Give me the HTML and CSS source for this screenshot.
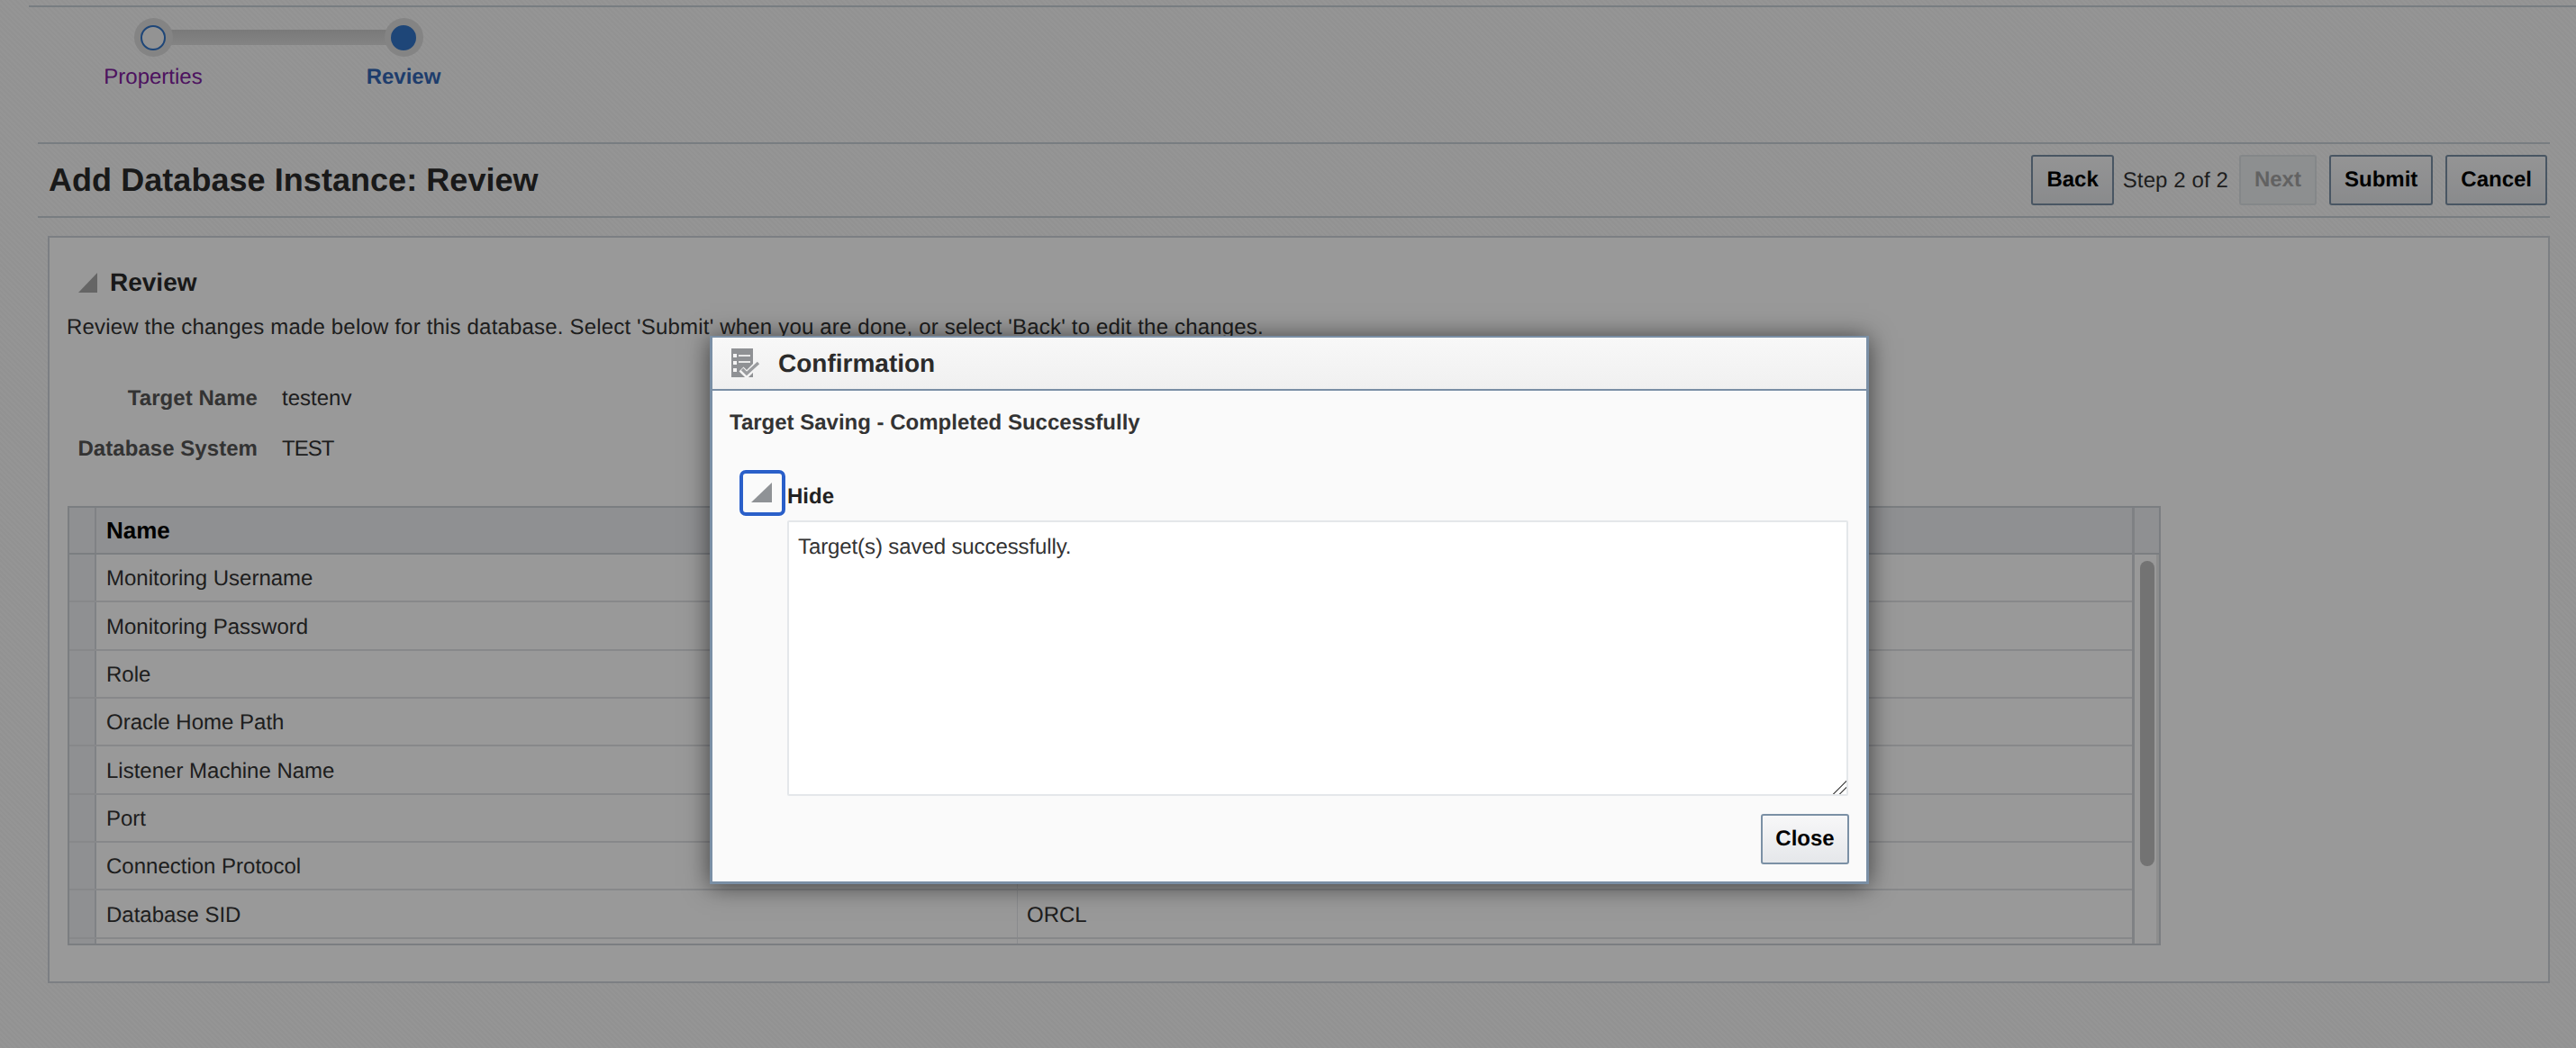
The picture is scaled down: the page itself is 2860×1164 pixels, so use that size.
FILE: index.html
```html
<!DOCTYPE html>
<html lang="en">
<head>
<meta charset="utf-8">
<title>Add Database Instance: Review</title>
<link rel="stylesheet" href="styles.css">
</head>
<body>
<div class="page">
  <div class="top-rule"></div>
  <nav class="train">
    <div class="step step-visited"><span class="dot"><span class="dot-inner"></span></span><a class="step-label">Properties</a></div>
    <div class="step step-current"><span class="dot"><span class="dot-inner"></span></span><a class="step-label">Review</a></div>
  </nav>
  <header class="page-head">
    <h1 class="title">Add Database Instance: Review</h1>
    <div class="actions">
      <button class="btn">Back</button>
      <span class="step-count">Step 2 of 2</span>
      <button class="btn btn-off">Next</button>
      <button class="btn btn-gap">Submit</button>
      <button class="btn btn-gap">Cancel</button>
    </div>
  </header>
  <main class="panel">
    <div class="section-head">
      <svg class="tri" viewBox="0 0 21 22"><polygon points="21,0 21,22 0,22"/></svg>
      <h2 class="section-title">Review</h2>
    </div>
    <p class="desc">Review the changes made below for this database. Select 'Submit' when you are done, or select 'Back' to edit the changes.</p>
    <dl class="form">
      <dt>Target Name</dt><dd>testenv</dd>
      <dt>Database System</dt><dd class="caps">TEST</dd>
    </dl>
    <div class="tbl">
      <div class="tbl-main">
        <div class="tr th"><div class="gut"></div><div class="td">Name</div><div class="td"></div></div>
        <div class="tr"><div class="gut"></div><div class="td">Monitoring Username</div><div class="td"></div></div>
        <div class="tr"><div class="gut"></div><div class="td">Monitoring Password</div><div class="td"></div></div>
        <div class="tr"><div class="gut"></div><div class="td">Role</div><div class="td"></div></div>
        <div class="tr"><div class="gut"></div><div class="td">Oracle Home Path</div><div class="td"></div></div>
        <div class="tr"><div class="gut"></div><div class="td">Listener Machine Name</div><div class="td"></div></div>
        <div class="tr"><div class="gut"></div><div class="td">Port</div><div class="td"></div></div>
        <div class="tr"><div class="gut"></div><div class="td">Connection Protocol</div><div class="td"></div></div>
        <div class="tr"><div class="gut"></div><div class="td">Database SID</div><div class="td">ORCL</div></div>
        <div class="tr"><div class="gut"></div><div class="td"></div><div class="td"></div></div>
      </div>
      <div class="scroller">
        <div class="scroll-corner"></div>
        <div class="scroll-track"><div class="scroll-thumb"></div></div>
      </div>
    </div>
  </main>
</div>
<div class="scrim"></div>
<section class="dialog">
  <div class="dlg-head">
    <svg class="dlg-icon" viewBox="0 0 32 33">
      <rect x="0" y="0" width="24" height="32" fill="#8f9194"/>
      <rect x="2" y="6" width="4" height="4" fill="#f4f4f4"/>
      <rect x="2" y="14" width="4" height="4" fill="#f4f4f4"/>
      <rect x="2" y="22" width="4" height="4" fill="#f4f4f4"/>
      <rect x="8" y="7" width="13" height="2" fill="#e8e8e8"/>
      <rect x="8" y="14" width="13" height="2" fill="#e8e8e8"/>
      <path d="M11 23l6 6L31 15" fill="none" stroke="#f4f4f4" stroke-width="7"/>
      <path d="M12 23l5 5L30 16" fill="none" stroke="#9a9c9f" stroke-width="3.4"/>
    </svg>
    <h2 class="dlg-title">Confirmation</h2>
  </div>
  <div class="dlg-body">
    <div class="dlg-msg">Target Saving - Completed Successfully</div>
    <div class="hide-row">
      <button class="disclose"><svg class="tri-sm" viewBox="0 0 23 22"><polygon points="23,0 23,22 0,22"/></svg></button>
      <span class="hide-label">Hide</span>
    </div>
    <textarea class="detail" readonly>Target(s) saved successfully.</textarea>
    <div class="dlg-foot"><button class="btn">Close</button></div>
  </div>
</section>
</body>
</html>
```
FILE: styles.css
```css
* { box-sizing: border-box; }
html, body { margin: 0; height: 1164px; overflow: hidden; }
body {
  position: relative;
  font-family: "Liberation Sans", Arial, sans-serif;
  font-size: 24px;
  color: #333;
  text-rendering: geometricPrecision;
  background: repeating-linear-gradient(45deg, #f9f9f9 0 2px, #f3f3f4 2px 4px);
}
.page { display: flex; flex-direction: column; height: 1164px; padding-top: 6px; }
.top-rule { height: 2px; margin-left: 32px; background: #c9d0d8; flex: none; }

.train { display: flex; padding: 12px 0 0 31px; height: 150px; flex: none; }
.step { position: relative; display: flex; flex-direction: column; align-items: center; width: 278px; }
.dot { position: relative; z-index: 1; display: flex; align-items: center; justify-content: center; width: 43px; height: 43px; border-radius: 50%; background: #dcdcdc; }
.dot-inner { width: 28px; height: 28px; border-radius: 50%; border: 2px solid #3375c8; background: #f6f6f6; }
.step-current .dot-inner { background: #3375c8; }
.step-visited::after { content: ""; position: absolute; left: 139px; top: 13px; width: 278px; height: 17px; background: linear-gradient(#cbcbcb, #dcdcdc); }
.step-label { margin-top: 8px; line-height: 30px; }
.step-visited .step-label { color: #80209e; }
.step-current .step-label { color: #3366b4; font-weight: bold; }

.page-head { display: flex; align-items: center; justify-content: space-between; height: 84px; margin: 0 29px 0 42px; padding: 0 3px 0 12px; border-top: 2px solid #c9d0d8; border-bottom: 2px solid #c9d0d8; flex: none; }
.title { margin: 0; font-size: 36px; line-height: 44px; font-weight: bold; letter-spacing: .05px; color: #2b2b2b; }
.actions { display: flex; align-items: center; }
.btn { height: 56px; padding: 0 15px; border: 2px solid #7b90a5; border-radius: 3px; background: linear-gradient(#f7f7f8, #e5e7ea); font: bold 24px "Liberation Sans", Arial, sans-serif; color: #000; text-rendering: geometricPrecision; }
.btn-off { color: #a4a4a4; border-color: #dde1e5; background: #eceef0; margin-left: 12px; }
.btn-gap { margin-left: 14px; }
.step-count { margin-left: 10px; padding-top: 2px; letter-spacing: .1px; color: #333; }

.panel { margin: 20px 29px 0 53px; padding: 33px 20px 40px 19px; height: 830px; border: 2px solid #cfd4da; background: #fff; flex: none; }
.section-head { display: flex; align-items: center; height: 34px; margin-left: 13px; gap: 14px; }
.tri { width: 21px; height: 22px; flex: none; }
.tri polygon { fill: #a9a9a9; }
.section-title { margin: 0; font-size: 28px; line-height: 34px; font-weight: bold; color: #2b2b2b; }
.desc { margin: 17px 0 0; line-height: 32px; letter-spacing: .18px; color: #333; }
.form { display: grid; grid-template-columns: 212px 1fr; column-gap: 27px; grid-auto-rows: 56px; margin: 34px 0 0; align-items: center; }
.form dt { padding-top: 2px; text-align: right; font-weight: bold; letter-spacing: .05px; color: #555; }
.form dd { margin: 0; padding-top: 2px; color: #333; }
.form .caps { letter-spacing: -1px; }

.tbl { display: flex; width: 2324px; height: 488px; margin: 36px 0 0 1px; border: 2px solid #cdd2d8; overflow: hidden; }
.tbl-main { flex: 1; min-width: 0; }
.tr { display: grid; grid-template-columns: 30px 1022px 1fr; height: 53.35px; border-bottom: 2px solid #e1e3e6; }
.th { height: 52px; border-bottom: 2px solid #cdd2d8; background: #eef0f3; font-weight: bold; font-size: 26px; color: #000; }
.gut { background: #eef0f3; border-right: 2px solid #d5d9de; }
.td { display: flex; align-items: center; padding: 3px 0 0 11px; min-width: 0; }
.th .td { padding-top: 0; }
.td + .td { border-left: 1px solid #e6e8eb; padding-left: 10px; }
.th .td + .td { border-left: 0; }
.scroller { width: 30px; flex: none; display: flex; flex-direction: column; border-left: 3px solid #d4d8dc; }
.scroll-corner { height: 52px; background: #eef0f3; border-bottom: 2px solid #cdd2d8; flex: none; }
.scroll-track { flex: 1; border-right: 3px solid #ececec; background: #fff; }
.scroll-thumb { width: 16px; height: 339px; margin: 7px 0 0 6px; border-radius: 8px; background: #c0c0c0; }

.scrim { position: absolute; inset: 0; z-index: 2; background: rgba(0, 0, 0, .4); }

.dialog { position: absolute; z-index: 3; left: 788px; top: 373px; width: 1287px; height: 609px; display: flex; flex-direction: column; border: solid #7a8fa5; border-width: 2px 3px 3px 3px; background: #fafafa; box-shadow: 0 2px 26px rgba(0, 0, 0, .6); }
.dlg-head { display: flex; align-items: center; height: 59px; padding-left: 21px; gap: 20px; background: linear-gradient(#f8f8f8, #f0f0f0); border-bottom: 2px solid #7a8fa5; flex: none; }
.dlg-icon { width: 32px; height: 33px; flex: none; }
.dlg-title { margin: 0; font-size: 28px; line-height: 34px; font-weight: bold; color: #2b2b2b; }
.dlg-body { padding: 20px 19px 0 19px; }
.dlg-msg { font-weight: bold; line-height: 32px; color: #333; }
.hide-row { display: flex; align-items: flex-end; height: 51px; margin: 36px 0 0 11px; gap: 2px; }
.disclose { display: flex; align-items: flex-end; justify-content: flex-end; width: 51px; height: 51px; padding: 0 11px 11px 0; border: 4px solid #2a5fc9; border-radius: 7px; background: #fafafa; box-shadow: 0 0 0 1px #fff; }
.tri-sm { width: 23px; height: 22px; display: block; }
.tri-sm polygon { fill: #8f9296; }
.hide-label { font-weight: bold; line-height: 30px; color: #222; margin-bottom: 6px; }
.detail { display: block; width: 1178px; height: 306px; margin: 5px 0 0 64px; padding: 13px 10px; border: 2px solid #e4e7ea; border-radius: 2px; background: #fff; font: 24px/30px "Liberation Sans", Arial, sans-serif; letter-spacing: -.1px; color: #333; outline: 0; text-rendering: geometricPrecision; }
.detail::-webkit-resizer { background: linear-gradient(135deg, transparent 48%, #666 48% 55%, transparent 55% 72%, #666 72% 79%, transparent 79%); }
.dlg-foot { display: flex; justify-content: flex-end; margin-top: 20px; }
.dlg-foot .btn { width: 98px; padding: 0; }
```
